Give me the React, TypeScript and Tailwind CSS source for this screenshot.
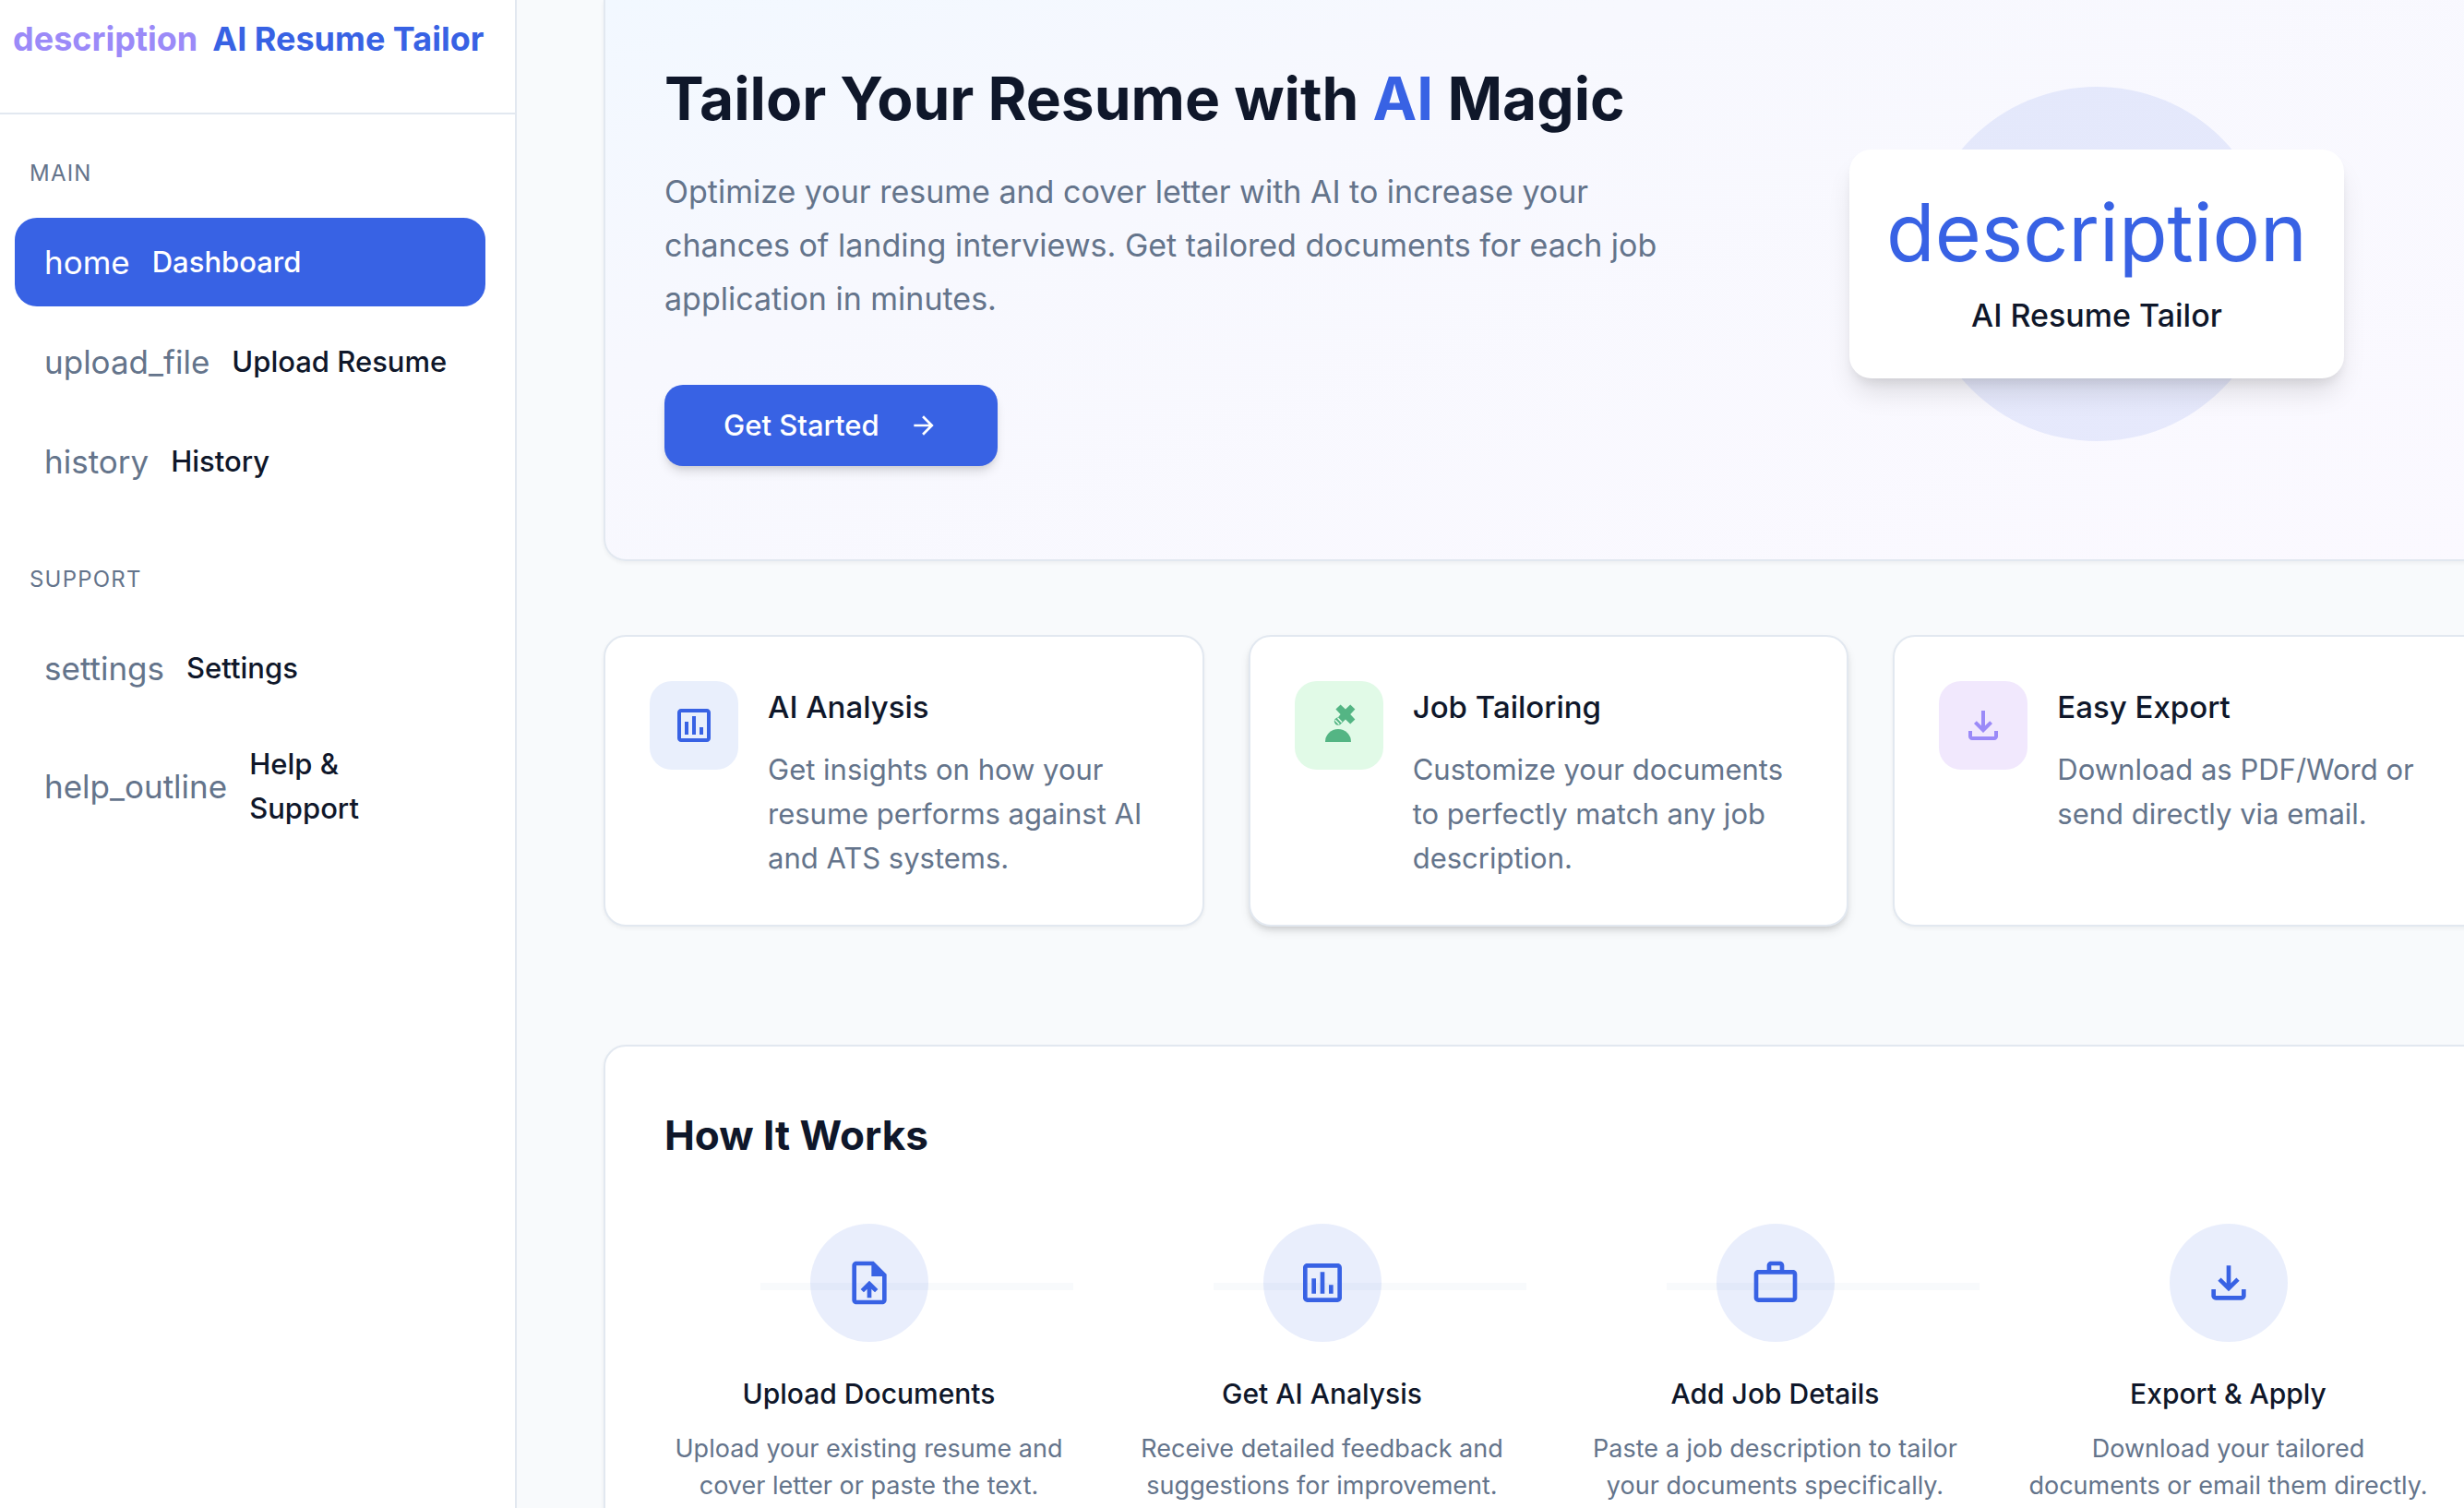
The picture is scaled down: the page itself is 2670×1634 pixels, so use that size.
import type { ReactNode } from "react";
import {
  MdArrowForward,
  MdOutlineAssessment,
  MdOutlineFileDownload,
  MdOutlineUploadFile,
  MdWorkOutline,
} from "react-icons/md";

type NavEntry = { icon: string; label: string; active?: boolean };

const mainNav: NavEntry[] = [
  { icon: "home", label: "Dashboard", active: true },
  { icon: "upload_file", label: "Upload Resume" },
  { icon: "history", label: "History" },
];

const supportNav: NavEntry[] = [
  { icon: "settings", label: "Settings" },
  { icon: "help_outline", label: "Help & Support" },
];

function NavGroup({ title, items }: { title: string; items: NavEntry[] }) {
  return (
    <section>
      <h2 className="mb-4 px-4 py-4 text-[24px] leading-8 tracking-wider text-[#64748b] uppercase">{title}</h2>
      <ul className="flex flex-col gap-3">
        {items.map((item) => (
          <li key={item.label}>
            <a
              href="#"
              aria-current={item.active ? "page" : undefined}
              className={
                item.active
                  ? "flex items-center gap-6 rounded-3xl bg-[#3862e4] py-5 pr-10 pl-8 text-white"
                  : "flex items-center gap-6 rounded-3xl py-5 pr-10 pl-8 text-[#0f172a]"
              }
            >
              <span className={item.active ? "text-[35px] leading-14" : "text-[35px] leading-14 text-[#64748b]"}>
                {item.icon}
              </span>
              <span className="text-[31px] leading-12 font-medium">{item.label}</span>
            </a>
          </li>
        ))}
      </ul>
    </section>
  );
}

function TailorIcon() {
  return (
    <svg viewBox="0 0 24 24" className="size-12" fill="currentColor" aria-hidden="true">
      <path d="M4.5 21a7 7 0 0 1 14 0z" />
      <path d="M10.2 3.3 12.8.7l2.7 2.6L18.1.7l2.6 2.6L18.1 6l2.6 2.7-2.6 2.6-2.6-2.6-2.3 2.3-2-3L12.8 6z" />
      <circle cx="11.5" cy="9.8" r="2.1" />
      <path d="m11.3 8 2.2 2.3M9.9 9.1l2.2 2.3" stroke="#e1fae7" strokeWidth="0.8" fill="none" />
    </svg>
  );
}

const features: { title: string; text: string; icon: ReactNode; tile: string; card: string }[] = [
  {
    title: "AI Analysis",
    text: "Get insights on how your resume performs against AI and ATS systems.",
    icon: <MdOutlineAssessment className="size-12" />,
    tile: "flex size-24 shrink-0 items-center justify-center rounded-3xl bg-[#e9effc] text-[#3862e4]",
    card: "flex gap-8 rounded-3xl border-2 border-[#e2e8f0] bg-white p-12 shadow-[0_2px_4px_rgba(0,0,0,0.05)]",
  },
  {
    title: "Job Tailoring",
    text: "Customize your documents to perfectly match any job description.",
    icon: <TailorIcon />,
    tile: "flex size-24 shrink-0 items-center justify-center rounded-3xl bg-[#e1fae7] text-[#54b584]",
    card: "flex gap-8 rounded-3xl border-2 border-[#e2e8f0] bg-white p-12 shadow-[0_6px_12px_-2px_rgba(0,0,0,0.12),0_4px_6px_-2px_rgba(0,0,0,0.1)]",
  },
  {
    title: "Easy Export",
    text: "Download as PDF/Word or send directly via email.",
    icon: <MdOutlineFileDownload className="size-12" />,
    tile: "flex size-24 shrink-0 items-center justify-center rounded-3xl bg-[#f1e8fd] text-[#9b8af8]",
    card: "flex gap-8 rounded-3xl border-2 border-[#e2e8f0] bg-white p-12 shadow-[0_2px_4px_rgba(0,0,0,0.05)]",
  },
];

const steps: { title: string; text: string; icon: ReactNode }[] = [
  {
    title: "Upload Documents",
    text: "Upload your existing resume and cover letter or paste the text.",
    icon: <MdOutlineUploadFile className="size-14" />,
  },
  {
    title: "Get AI Analysis",
    text: "Receive detailed feedback and suggestions for improvement.",
    icon: <MdOutlineAssessment className="size-14" />,
  },
  {
    title: "Add Job Details",
    text: "Paste a job description to tailor your documents specifically.",
    icon: <MdWorkOutline className="size-14" />,
  },
  {
    title: "Export & Apply",
    text: "Download your tailored documents or email them directly.",
    icon: <MdOutlineFileDownload className="size-14" />,
  },
];

export default function App() {
  return (
    <div className="flex h-screen overflow-hidden bg-[#f8fafc] font-['Inter',sans-serif] text-[#0f172a]">
      <aside className="w-[560px] shrink-0 border-r-2 border-[#e2e8f0] bg-white">
        <div className="flex h-31 items-start gap-4 border-b-2 border-[#e2e8f0] pt-3 pl-3.5 text-[36px] leading-15 font-bold whitespace-nowrap">
          <span className="text-[#9b8af8]">description</span>
          <span className="text-[#3862e4]">AI Resume Tailor</span>
        </div>
        <nav className="flex flex-col gap-12 pt-8 pr-8 pl-4">
          <NavGroup title="Main" items={mainNav} />
          <NavGroup title="Support" items={supportNav} />
        </nav>
      </aside>

      <main className="-mr-8 min-w-0 flex-1 pl-[94px]">
        <section className="flex items-center justify-between rounded-b-3xl border-2 border-t-0 border-[#e2e8f0] bg-linear-160 from-[#f2f8ff] via-[#f7f8fe] via-30% to-[#fbf9ff] px-16 pt-[30px] pb-16 shadow-[0_2px_4px_rgba(0,0,0,0.05)]">
          <div>
            <h1 className="text-[64px] leading-20 font-bold">
              Tailor Your Resume with <span className="text-[#3862e4]">AI</span> Magic
            </h1>
            <p className="mt-8 max-w-[1100px] text-[34px] leading-[58px] text-[#64748b]">
              Optimize your resume and cover letter with AI to increase your chances of landing interviews. Get
              tailored documents for each job application in minutes.
            </p>
            <button
              type="button"
              className="mt-16 flex h-22 items-center gap-8 rounded-[20px] bg-[#3862e4] px-16 text-[31px] font-medium text-white shadow-[0_8px_12px_-2px_rgba(0,0,0,0.12),0_4px_6px_-2px_rgba(0,0,0,0.08)]"
            >
              Get Started
              <MdArrowForward className="size-8" />
            </button>
          </div>
          <div className="relative flex h-[512px] w-[38%] items-center justify-center">
            <div className="absolute size-96 rounded-full bg-[#3862e4]/10" />
            <div className="relative flex flex-col items-center rounded-3xl bg-white p-10 shadow-[0_20px_30px_-6px_rgba(0,0,0,0.12),0_8px_12px_-4px_rgba(0,0,0,0.08)]">
              <span className="mb-3 text-[86px] leading-25 text-[#3862e4]">description</span>
              <span className="text-[34px] leading-14 font-medium">AI Resume Tailor</span>
            </div>
          </div>
        </section>

        <section className="mt-20 grid grid-cols-3 gap-12">
          {features.map((feature) => (
            <article key={feature.title} className={feature.card}>
              <div className={feature.tile}>{feature.icon}</div>
              <div>
                <h3 className="text-[33px] leading-14 font-medium">{feature.title}</h3>
                <p className="mt-4 text-[31px] leading-12 text-[#64748b]">{feature.text}</p>
              </div>
            </article>
          ))}
        </section>

        <section className="mt-32 rounded-3xl border-2 border-[#e2e8f0] bg-white p-16 shadow-[0_2px_4px_rgba(0,0,0,0.05)]">
          <h2 className="text-[44px] leading-16 font-bold">How It Works</h2>
          <ol className="mt-16 grid grid-cols-4 gap-12">
            {steps.map((step, index) => (
              <li key={step.title} className="relative flex flex-col items-center text-center">
                {index < steps.length - 1 && (
                  <div className="absolute top-16 right-0 left-[104px] h-2 bg-[#f8fafc]" />
                )}
                <div className="relative flex size-32 items-center justify-center rounded-full bg-[#3862e4]/11 text-[#3862e4]">
                  {step.icon}
                </div>
                <h3 className="mt-8 text-[30px] leading-12 font-medium">{step.title}</h3>
                <p className="mt-4 text-[27px] leading-10 text-[#64748b]">{step.text}</p>
              </li>
            ))}
          </ol>
        </section>
      </main>
    </div>
  );
}
